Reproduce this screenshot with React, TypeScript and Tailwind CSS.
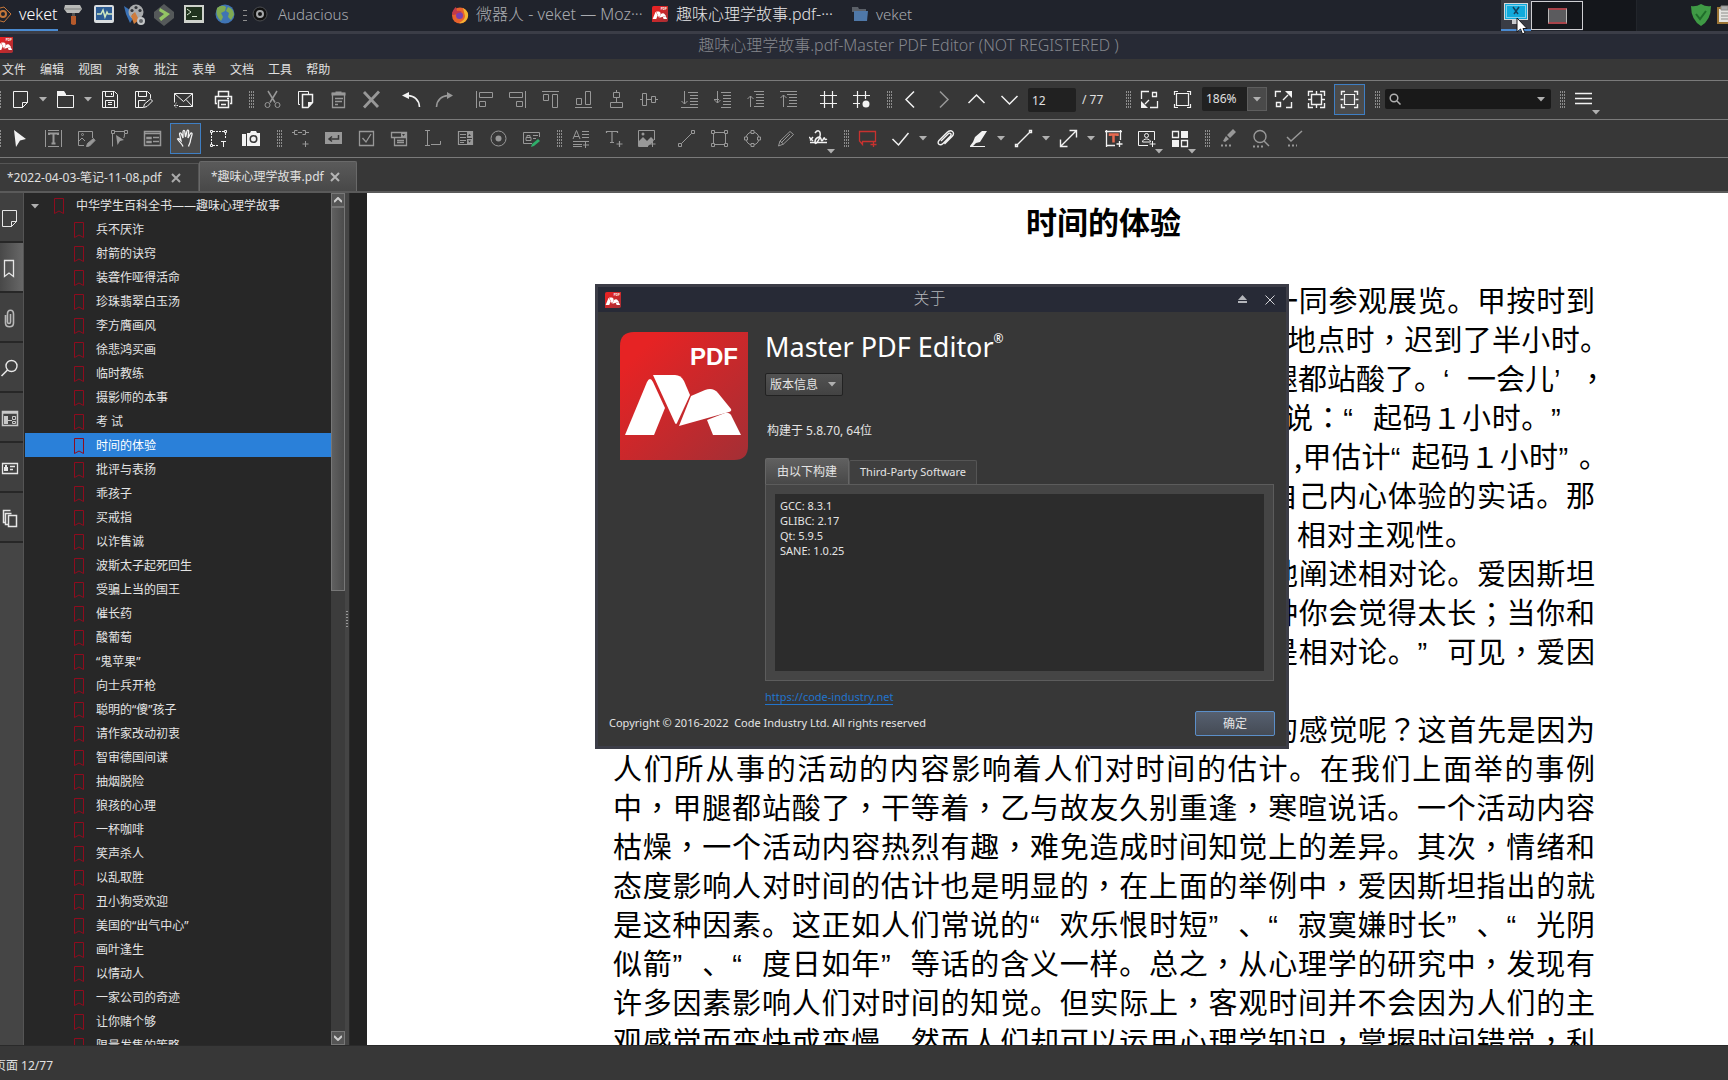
import React from "react";

type IconProps = { name: string };

/* Toolbar glyphs, drawn on a 19 x 19 grid */
const glyphs: Record<string, React.ReactNode> = {
  new: <path d="M2.5 1.5h14v11l-5 5h-9zM11.5 17.5v-5h5z" />,
  open: (
    <>
      <path d="M1.500 5.500h16v12h-16z" />
      <path d="M1 1h7l2 3v2H1z" fill="currentColor" stroke="none" />
    </>
  ),
  save: <path d="M1.500 1.500h12l3 3v13h-15zM4.500 1.500v5h8v-5M10.500 3v2M4.500 17.500v-7h9v7M7 12.500h4M7 14.500h4" />,
  saveas: (
    <>
      <path d="M9 17.500H1.500v-16h12l3 3v4M4.500 1.500v5h8v-5M4.500 17.500v-7h7" />
      <path d="M9.500 17.500l1-3.500 6-5 2 2-5.500 5.500z" />
    </>
  ),
  mail: (
    <>
      <path d="M5 16.500h13.500v-13H.5v9M.5 3.500l9 8 9-8M12 9.500l6.500 7" />
      <path d="M0 15.500h5M2.500 13l-2.500 2.500L2.500 18" strokeDasharray="1.500 1" />
    </>
  ),
  print: (
    <>
      <path d="M4.500 6V1.500h10V6M3 13.500H1.500v-7h16v7H16" strokeWidth="1.500" />
      <path d="M4.500 10.500h10v7h-10zM7 14.500h5M13 8.500h2" strokeWidth="1.500" />
    </>
  ),
  cut: (
    <>
      <path d="M5 1l7 11.500M14 1L7 12.500" strokeWidth="1.500" />
      <circle cx="4.500" cy="15" r="2.500" />
      <circle cx="14.500" cy="15" r="2.500" />
    </>
  ),
  copy: (
    <>
      <path d="M4 14.500H2.500v-13h10V4" />
      <path d="M6.500 4.500h10v8l-4.500 5H6.500z" strokeWidth="1.500" />
      <path d="M12 17v-5h5z" fill="currentColor" stroke="none" />
    </>
  ),
  paste: (
    <>
      <path d="M3.500 3.500h12v14h-12zM6 8.500h8M6 11.500h7M6 14.500h3" strokeWidth="1.300" />
      <path d="M2.500 2.500h4v-1h6v1h4v3h-14z" fill="currentColor" stroke="none" />
    </>
  ),
  del: <path d="M2 2l14 15M17 1.500L2 17.500" strokeWidth="2.800" />,
  undo: (
    <>
      <path d="M17.500 17c-.5-7-4-11-12-11.500" strokeWidth="1.600" />
      <path d="M0 5.500L7 2v7z" fill="currentColor" stroke="none" />
    </>
  ),
  redo: (
    <>
      <path d="M1.500 17c.5-7 4-11 12-11.500" strokeWidth="1.600" />
      <path d="M18 5.500L12 2v7z" fill="currentColor" stroke="none" />
    </>
  ),
  alignL: <path d="M1.500 1v17M4.500 2.500h13v5h-13zM4.500 11.500h6v5h-6z" />,
  alignR: <path d="M17.500 1v17M1.500 2.500h13v5h-13zM8.500 11.500h6v5h-6z" />,
  alignT: <path d="M1 1.500h17M2.500 4.500h5v6h-5zM11.500 4.500h5v13h-5z" />,
  alignB: <path d="M1 17.500h17M2.500 8.500h5v6h-5zM11.500 1.500h5v13h-5z" />,
  alignC: <path d="M9.500 0v2M6.500 2.500h6v5h-6zM9.500 8v4M3.500 12.500h12v5h-12z" />,
  alignM: <path d="M2.500 3.500h4v12h-4zM7 9.500h5M11.500 6.500h4v6h-4zM16 9.500h2M0 9.500h2" />,
  bottom: <path d="M1 17.500h17M4.500 1v13M1.500 11l3 3 3-3M8 2.500h10M10 5.500h8M10 8.500h8M10 11.500h8M10 14.500h8" />,
  back: <path d="M8 17.500h10M1 9.500h5M4.500 1v12M1.500 10l3 3 3-3M8 2.500h10M10 5.500h8M10 8.500h8M10 11.500h8M10 14.500h8" />,
  fwd: <path d="M8 1.500h10M4.500 17V6M1.500 9l3-3 3 3M10 4.500h8M10 7.500h8M10 10.500h8M10 13.500h8M8 16.500h10" />,
  top: <path d="M1 1.500h17M4.500 17V5M1.500 8l3-3 3 3M8 4.500h10M10 7.500h8M10 10.500h8M10 13.500h8M8 16.500h10" />,
  grid: <path d="M1 5.500h17M1 13.500h17M5.500 1v17M13.500 1v17" strokeWidth="1.200" />,
  snap: (
    <>
      <path d="M1 5.500h17M1 13.500h7M5.500 1v17M13.500 1v8" strokeWidth="1.200" />
      <circle cx="14" cy="14" r="3.500" fill="currentColor" stroke="none" />
    </>
  ),
  prev: <path d="M13 1.500l-8 8 8 8" strokeWidth="1.500" />,
  next: <path d="M6 1.500l8 8-8 8" strokeWidth="1.500" />,
  up: <path d="M1.500 13l8-8 8 8" strokeWidth="1.500" />,
  down: <path d="M1.500 6l8 8 8-8" strokeWidth="1.500" />,
  fitwin: (
    <>
      <path d="M1.500 9V1.500H9M12.500 2.500h4v4h-4zM17.500 11v6.500H10M5 14l4-4" strokeWidth="1.300" />
      <path d="M1 18v-7l7 7z" fill="currentColor" stroke="none" />
    </>
  ),
  actual: <path d="M3.500 3.500h12v12h-12zM1.500 5V1.500H5M14 1.500h3.500V5M17.500 14v3.500H14M5 17.500H1.500V14" strokeWidth="1.200" />,
  expand: (
    <>
      <path d="M1.500 7V1.500H7M2.500 12.500h4v4h-4zM17.500 12v5.500H12M9 10l5-5" strokeWidth="1.400" />
      <path d="M18 1v7l-7-7z" fill="currentColor" stroke="none" />
    </>
  ),
  fitpage: (
    <>
      <path d="M1.500 6V1.500H6M13 1.500h4.500V6M17.500 13v4.500H13M6 17.500H1.500V13" strokeWidth="1.400" />
      <path d="M4.500 4.500h10v10h-10zM9.500 1v3M9.500 15v3M1 9.500h3M15 9.500h3" strokeWidth="1.400" />
    </>
  ),
  fitwidth: (
    <>
      <path d="M1.500 5V1.500H5M14 1.500h3.500V5M17.500 14v3.500H14M5 17.500H1.500V14M.5 9.500h3M15.500 9.500h3" strokeWidth="1.400" />
      <path d="M4.500 4.500h10v10h-10z" strokeWidth="1.200" />
    </>
  ),
  menu: <path d="M1 3.500h17M1 8.500h17M1 13.500h17" strokeWidth="1.500" />,
  pointer: <path d="M3 1l12 9-6 1.500L5 18z" fill="currentColor" stroke="none" />,
  text: (
    <>
      <path d="M1.500 1v17M17.500 1v17M4 1.500h11M4 17.500h11" />
      <path d="M5 6V4.500h9V6M9.500 4.500v10M7.500 14.500h4" strokeWidth="2" />
    </>
  ),
  editimg: (
    <>
      <path d="M7 16.500H1.500v-14h14V9M2 12l3-3 3 3" />
      <circle cx="5.500" cy="5.500" r="1" />
      <path d="M9.500 17.500l1-3 6-5 1.500 2-5.500 5.500z" fill="currentColor" />
    </>
  ),
  editpath: (
    <>
      <path d="M5 2.500h9M2.500 5v12.500M14.500 5q0 4-1 4" />
      <path d="M1.500 1.500h3v3h-3zM14.500 1.500h3v3h-3z" />
      <path d="M6 6l8 5-4 1-2.500 4z" fill="currentColor" stroke="none" />
    </>
  ),
  form: <path d="M1.500 2.500h16v14h-16zM2 4.500h15M4 8.500h4v1H4zM10 8.500h6M4 12.500h4v1H4zM10 12.500h6" strokeWidth="1.500" />,
  hand: (
    <path
      d="M7 17.500c-1-3-4-5-5.500-7.500 1-1 2 0 3.500 1.500L3.500 5c0-1.500 1.500-1.500 2 0L7 9V2.500c.2-1.500 1.600-1.500 1.800 0L9.500 8l1.500-6c.5-1.300 1.800-1 1.700.5L12 9l2.500-4.500c.8-1 2-.3 1.500 1L14.500 11c0 3-1.500 4-2 6.500"
      strokeWidth="1.300"
    />
  ),
  marquee: (
    <>
      <path d="M4 2.500h11M2.500 4v11M16.500 4v5M4 16.500h5" strokeDasharray="2 1" />
      <path d="M1.500 1.500h2v2h-2zM15.500 1.500h2v2h-2zM1.500 15.500h2v2h-2zM12 12.500h5M14.500 12v6" />
    </>
  ),
  camera: (
    <>
      <path d="M0 5h4v12H0zM5 4h3l1-2h5l1 2h3v13H5z" fill="currentColor" stroke="none" />
      <circle cx="11.500" cy="10" r="4" fill="#373737" stroke="none" />
      <circle cx="11.500" cy="10" r="2.500" fill="currentColor" stroke="none" />
    </>
  ),
  link: <path d="M1 3.500h3M7 3.500h4M15 3.500h3M6.500 1.500h-3v4h3M11.500 1.500h3v4h-3M14.500 12v6M11.500 15h6" />,
  btn: (
    <>
      <path d="M1 3h17v12H1z" fill="currentColor" stroke="none" />
      <path d="M14.500 6v4H6M8 7.500L5 10l3 2.500" stroke="#373737" strokeWidth="1.500" />
    </>
  ),
  check: <path d="M2.500 2.500h14v14h-14zM5.500 9l3.500 4 5-8" strokeWidth="1.300" />,
  combo: (
    <>
      <path d="M1.500 3.500h15v5h-15zM4.500 8.500v8h12v-8M7 11.500h7M7 13.500h7" strokeWidth="1.300" />
      <path d="M11 3h5v5h-5z" fill="currentColor" stroke="none" />
      <path d="M12 5h3l-1.500 2z" fill="#373737" stroke="none" />
    </>
  ),
  field: <path d="M4.500 1.500v15M2 1.500h5M2 16.500h5M8 15.500h9.500V12" />,
  list: (
    <>
      <path d="M2.500 2.500h14v13h-14zM4 5.500h6M4 8.500h6M4 11.500h6M4 13.500h4" strokeWidth="1.200" />
      <path d="M11 3h5v6h-5zM11 10h5v5h-5z" fill="currentColor" stroke="none" />
      <path d="M12 7h3l-1.500-2zM12 11.500h3l-1.500 2z" fill="#373737" stroke="none" />
    </>
  ),
  radio: (
    <>
      <circle cx="9.500" cy="9.500" r="7.500" />
      <circle cx="9.500" cy="9.500" r="3" fill="currentColor" stroke="none" />
    </>
  ),
  sign: (
    <>
      <path d="M10 14.500H1.500v-11h16V8M4 11.500h5v-3H4zM5 8V6.500h3V8M11 6.500h5M11 9.500h3" />
      <path d="M9 18l1-3 6-5 2 2-6 5z" fill="#2fae6a" stroke="none" />
    </>
  ),
  addtext: <path d="M2 10L5.500 1.500 9 10M3 7.500h5M11 2.500h7M11 5.500h7M11 8.500h7M2 12.500h16M2 15.500h9M2 17.500h9M14.500 13v6M12 16h6" />,
  plustext: <path d="M2.500 4V2.500h11V4M8 2.500v11M6 13.500h4M15.500 12v6M12.500 15h6" strokeWidth="1.200" />,
  image: (
    <>
      <path d="M11 17.500H1.500v-16h16V11M15.500 12v6M12.500 15h6" />
      <path d="M2 12l4-4 4 4 4-4 3 3-2 3-4 3H2z" fill="currentColor" stroke="none" />
      <circle cx="6" cy="5" r="1.500" fill="currentColor" stroke="none" />
    </>
  ),
  line: <path d="M4.500 14.500l10-10M1.500 14.500h3v3h-3zM14.500 1.500h3v3h-3z" />,
  rect: <path d="M5 3.500h9M5 15.500h9M3.500 5v9M15.500 5v9M1.500 1.500h3v3h-3zM14.500 1.500h3v3h-3zM1.500 14.500h3v3h-3zM14.500 14.500h3v3h-3z" />,
  ellipse: (
    <>
      <circle cx="9.500" cy="9.500" r="6.500" />
      <path d="M8 1.500h3v3H8zM8 14.500h3v3H8zM1.500 8h3v3h-3zM14.500 8h3v3h-3z" fill="#373737" />
    </>
  ),
  pencil: <path d="M2.500 17l1.500-5L14 2.500l3.500 3L7.500 15zM4 12l3.500 3M5 14l9-9" />,
  initials: (
    <>
      <path d="M1 13.500h17" strokeWidth="1.500" />
      <path d="M0 8l4 4M4 8l-3 3.500M6 4c3-4 6-2 5 3s-5 10-5 6 5-7 6-3 2 0 3-1 0 3 3 1" strokeWidth="1.500" />
    </>
  ),
  callout: <path d="M5 12.500H4.500v3L1.500 12V2.500h16v10H5M15.500 12v6M12.500 15.500h6" strokeWidth="1.300" stroke="#c8322f" />,
  tick: <path d="M1.500 10l6 6 10-12" strokeWidth="1.500" />,
  clip: <path d="M5 12l7-7c2-2 4 0 2.500 2L7 14.500c-3 3-6.500 0-4-3L11 3.500c4-4 9 0 5 4L8.500 15" strokeWidth="1.400" />,
  marker: (
    <>
      <path d="M1 17.500h15" strokeWidth="1" />
      <path d="M6 8l7-6h5l-7 11-4 1-3 3H1l3-4z" fill="currentColor" stroke="none" />
    </>
  ),
  aline: <path d="M3 16L16 3M1.500 15.500h2v2h-2zM15.500 1.500h2v2h-2z" strokeWidth="1.400" />,
  darrow: <path d="M2 17L17 2M10.500 1.500h7v7M1.500 10.500v7h7" strokeWidth="1.400" />,
  tbox: (
    <>
      <path d="M11 16.500H2.500v-14h14V11M1 2.500h17M2.500 1v17M16.500 1v2M15.500 12v6M12.500 15h6" strokeWidth="1.300" />
      <path d="M6 7V5.500h7.500V7M9.500 5.500v8" stroke="#e5694f" strokeWidth="2.500" />
    </>
  ),
  stamp: (
    <>
      <path d="M11 16.500H1.500v-14h16V11M15.500 12v6M12.500 15h6" />
      <circle cx="9.500" cy="6.500" r="2" />
      <path d="M5.500 13c0-4 8-4 8 0z" />
    </>
  ),
  blocks: (
    <>
      <path d="M2.500 2.500h6v6h-6zM11.500 11.500h6v6h-6z" strokeWidth="1.300" />
      <path d="M11 2h7v7h-7zM2 11h7v7H2z" fill="currentColor" stroke="none" />
    </>
  ),
  hlDots: (
    <>
      <path d="M4 12l3-5 3 3-4 3zM8 6l6-6 3 3-6 6z" fill="currentColor" stroke="none" />
      <path d="M2 16.500h11" strokeWidth="2" strokeDasharray="2 2" />
    </>
  ),
  findDots: (
    <>
      <circle cx="8" cy="7.500" r="6" strokeWidth="1.400" />
      <path d="M12 12l5 5" strokeWidth="1.400" />
      <path d="M1 17.500h11" strokeWidth="2" strokeDasharray="2 2" />
    </>
  ),
  tickDots: (
    <>
      <path d="M2 8l4 4L17 2" strokeWidth="1.500" />
      <path d="M3 16.500h9" strokeWidth="2" strokeDasharray="2 2" />
    </>
  ),
  bookmark: <path d="M4.500 1.500h9v16L9 14l-4.500 3.500z" strokeWidth="1.300" />,
  attach: <path d="M5.500 6v8c0 5 8 5 8 0V5c0-5-6-5-6 0v8c0 2 3 2 3 0V5" strokeWidth="1.600" stroke="#b8b8b8" />,
  search: (
    <>
      <circle cx="11.500" cy="7" r="5.500" strokeWidth="1.400" />
      <path d="M7.500 11l-6 6" strokeWidth="1.600" />
    </>
  ),
  fields: (
    <g stroke="#c8c8c8">
      <path d="M2.500 2.500h15v14h-15zM2 4h16" strokeWidth="1.500" />
      <path d="M4 7h4v8H4z" fill="#c8c8c8" stroke="none" />
      <path d="M8 11.500h4M12.500 7.500h3v3h-3zM12.500 12.500h3v2h-3z" />
    </g>
  ),
  signs: (
    <>
      <path d="M2.500 4.500h15v10h-15zM10 7.500h5M10 10.500h3" strokeWidth="1.300" />
      <path d="M4 8h4v4H4zM5 6h2v2H5z" fill="currentColor" stroke="none" />
    </>
  ),
  pages: <path d="M6 13.500H3.500v-12h7M8 15.500H5.500v-11h6M8.500 6.500h8v11h-8z" strokeWidth="1.500" />,
};

function Icon({ name }: IconProps) {
  return (
    <svg viewBox="0 0 19 19" className="h-[19px] w-[19px] shrink-0" fill="none" stroke="currentColor" aria-hidden="true">
      {glyphs[name]}
    </svg>
  );
}

function PdfMark({ className }: { className: string }) {
  return (
    <svg viewBox="0 0 128 128" className={className} aria-hidden="true">
      <defs>
        <linearGradient id="mark" x1="0" y1="0" x2="1" y2="1">
          <stop offset="0.150" stopColor="#e62324" />
          <stop offset="1" stopColor="#a32f35" />
        </linearGradient>
      </defs>
      <path d="M14 0h114v114q0 14-14 14H0V14Q0 0 14 0z" fill="url(#mark)" />
      <path d="M5 103L27 50q3-6 6 0l12 26-11 27z" fill="#fff" />
      <path d="M33 43h22q6 0 9 6l6 14-13 28q-1 2-2 0z" fill="#fff" />
      <path d="M59 94l12-30 14-6q8-3 13 3l13 16q1 2-2 3z" fill="#fff" />
      <path d="M87 88l18-7q5-1 7 4l9 18H93z" fill="#fff" />
      <text x="70" y="33" fontFamily="Liberation Sans" fontWeight="700" fontSize="24" fill="#fff">PDF</text>
    </svg>
  );
}

const Caret = ({ className = "" }: { className?: string }) => (
  <svg viewBox="0 0 8 5" className={"h-[5px] w-2 shrink-0 fill-[#b0b0b0] " + className} aria-hidden="true">
    <path d="M0 0h8L4 4.500z" />
  </svg>
);

function Grip({ first = false }: { first?: boolean }) {
  return (
    <span className={first ? "flex h-[31px] w-1 shrink-0 items-center justify-start" : "flex h-[31px] w-4 shrink-0 items-center justify-end pr-0.5"}>
      <span className={(first ? "w-0.5" : "w-[5px]") + " h-[17px] bg-[repeating-linear-gradient(0deg,#8d8d8d_0_2px,transparent_2px_3px)] [mask-image:repeating-linear-gradient(90deg,#000_0_1px,transparent_1px_2px)]"} />
    </span>
  );
}

const Sep = () => <span className="mt-2 h-4 w-[7px] shrink-0" />;

/* Item grammar: "name" enabled, "-name" disabled, "!name" pressed, "name+" with a corner caret, "v" caret, "|" space, "#" grip */
function Tools({ items }: { items: string }) {
  return (
    <>
      {items.split(" ").map((t, i) => {
        if (t === "#") return <Grip key={i} />;
        if (t === "|") return <Sep key={i} />;
        if (t === "v")
          return (
            <button key={i} aria-label="更多" className="flex h-[31px] w-3 shrink-0 items-center justify-center">
              <Caret />
            </button>
          );
        const off = t.startsWith("-");
        const on = t.startsWith("!");
        const corner = t.endsWith("+");
        const name = t.replace(/[-!+]/g, "");
        return (
          <button
            key={i}
            aria-label={name}
            className={
              "relative flex h-[31px] shrink-0 items-center justify-center " +
              (on ? "mx-px w-[31px] border border-[#3f7fc4] bg-[#4b4b4b] " : "w-[33px] ") +
              (off ? "text-[#989898]" : "text-[#f2f2f2]")
            }
          >
            <Icon name={name} />
            {corner && <Caret className="absolute right-0 bottom-0" />}
          </button>
        );
      })}
    </>
  );
}

function TaskBar() {
  return (
    <div className="flex h-[34px] items-stretch border-b-[3px] border-[#3b3d47] bg-[#20232c] text-base leading-[28px] font-light text-[#a9abb0]">
      <button className="flex w-[58px] shrink-0 items-start border-b-2 border-[#4a8ad0] text-white">
        <svg viewBox="0 0 18 20" className="-ml-1 mt-1 h-5 w-[18px] shrink-0" fill="none" stroke="#c4763a" aria-hidden="true">
          <circle cx="7" cy="10" r="3" strokeWidth="2" />
          <path d="M0 5l8-2 7 7-7 8-7-2" />
        </svg>
        <span className="ml-[5px]">veket</span>
      </button>
      <div className="flex shrink-0 items-start gap-2.5 pt-1 pl-[5px]">
        <svg viewBox="0 0 20 22" className="h-[22px] w-5" aria-hidden="true">
          <path d="M2 1h15l2 4-3 4H4L1 5z" fill="#b9bab8" />
          <path d="M2 5h16" stroke="#7d7f7d" />
          <path d="M9 9h3v4H9z" fill="#555" />
          <path d="M8 12h5v8q-2 2-5 0z" fill="#b65a2b" />
        </svg>
        <svg viewBox="0 0 22 20" className="mr-0.5 h-5 w-[22px]" aria-hidden="true">
          <rect x="1" y="1" width="20" height="18" rx="2" fill="#d9dde0" />
          <rect x="3" y="3" width="16" height="13" fill="#2c5c94" />
          <path d="M4 10h4l2-4 2 7 2-5 1 2h4" fill="none" stroke="#cfe8c0" strokeWidth="1.500" />
        </svg>
        <svg viewBox="0 0 22 22" className="-ml-1 h-[22px] w-[22px]" aria-hidden="true">
          <path d="M1 2l12 8-6 9-4-9z" fill="#3a72b8" />
          <circle cx="13" cy="8" r="7.500" fill="#a9abad" />
          <g fill="#33363b">
            <circle cx="13" cy="3.500" r="1.600" /><circle cx="9" cy="6.500" r="1.600" /><circle cx="17" cy="6.500" r="1.600" /><circle cx="11" cy="11" r="1.600" />
          </g>
          <path d="M8 12l4-4 4 8-5 4z" fill="#cf7c3c" />
          <circle cx="18" cy="17" r="4" fill="#c4c6c8" />
          <circle cx="18" cy="17" r="2" fill="#63666a" />
        </svg>
        <svg viewBox="0 0 22 22" className="-ml-0.5 h-[22px] w-[22px]" aria-hidden="true">
          <path d="M11 0l10 8v6l-10 8L1 14V8z" fill="#55595a" />
          <path d="M7 4l10 6-9 7-2-3 5-4-5-3z" fill="#93c464" />
        </svg>
        <svg viewBox="0 0 22 20" className="-ml-0.5 h-5 w-[22px]" aria-hidden="true">
          <rect x="1" y="1" width="20" height="18" fill="#cfd2cc" />
          <rect x="3" y="3" width="16" height="13" fill="#20331e" />
          <path d="M4 5l4 3-4 3M9 12.500h5" fill="none" stroke="#d7e6cf" />
        </svg>
        <svg viewBox="0 0 20 20" className="h-5 w-5" aria-hidden="true">
          <circle cx="10" cy="10" r="9.500" fill="#3f74b4" />
          <path d="M2 4q5-4 9-1l-1 4-4 2 2 4-2 4q-6-5-4-13zM13 3q6 2 6 8l-3 5-3-3 1-4-3-2z" fill="#7faa52" />
        </svg>
        <span className="mt-1.5 -ml-0.5 h-[11px] w-1 bg-[repeating-linear-gradient(0deg,#8d8d8d_0_1px,transparent_1px_5px)]" />
      </div>
      <button className="ml-[5px] flex w-[199px] shrink-0 items-start gap-2.5 text-[15px]">
        <svg viewBox="0 0 16 16" className="mt-1.5 h-4 w-4" aria-hidden="true">
          <circle cx="8" cy="8" r="7" fill="#111" stroke="#4a4c50" />
          <circle cx="8" cy="8" r="3" fill="none" stroke="#a4a6a8" strokeWidth="2" />
        </svg>
        Audacious
      </button>
      <button className="flex w-[201px] shrink-0 items-start gap-[7px] whitespace-nowrap">
        <svg viewBox="0 0 18 18" className="mt-1.5 h-[18px] w-[18px] shrink-0" aria-hidden="true">
          <circle cx="9" cy="9.500" r="8" fill="#e8622c" />
          <path d="M12 2q7 4 4.500 10Q14 18 8 17q6-3 6-7z" fill="#f3b532" />
          <circle cx="8.500" cy="9.500" r="3.500" fill="#7b3fae" />
          <path d="M1 7q2-5 4-6l1 4q2-1 5 1l-4 1q-2 2-5 2z" fill="#c23a4a" />
        </svg>
        微器人 - veket — Moz···
      </button>
      <button className="flex w-[200px] shrink-0 items-start gap-2 whitespace-nowrap text-[#e6e6e8]">
        <PdfMark className="mt-1.5 h-4 w-4 shrink-0" />
        趣味心理学故事.pdf-···
      </button>
      <button className="flex items-start gap-2 text-[15px]">
        <svg viewBox="0 0 16 16" className="mt-1.5 h-4 w-4" aria-hidden="true">
          <path d="M0 1h6l1 2h7v3H0z" fill="#5b6068" />
          <path d="M2 5h14l-1 10H2z" fill="#4f78a8" />
        </svg>
        veket
      </button>
      <div className="ml-auto flex shrink-0 items-stretch">
        <button aria-label="截图" className="relative flex w-[30px] justify-center border-b-2 border-[#4a8ad0] bg-[#3a3d45] pt-[3px]">
          <svg viewBox="0 0 24 24" className="h-6 w-6" aria-hidden="true">
            <rect x="0.500" y="0.500" width="23" height="16" fill="#10aadc" stroke="#d5d8da" />
            <rect x="2.500" y="2.500" width="19" height="12" fill="none" stroke="#f4f8fa" strokeDasharray="1 1" />
            <path d="M9 4l5 7M15 4l-5 7" stroke="#15405c" strokeWidth="1.500" />
            <path d="M8 17h8v4H8z" fill="#c9ccd0" />
          </svg>
          <svg viewBox="0 0 12 18" className="absolute top-[17px] left-[15px] z-10 h-[18px] w-3" aria-hidden="true">
            <path d="M1 1v14l3.500-3 2 5 2.500-1-2-4.500h4z" fill="#fff" stroke="#14161b" />
          </svg>
        </button>
        <button aria-label="工作区" className="my-px flex w-[52px] items-center justify-center border border-[#cfcfd3] bg-[#14161b]">
          <span className="h-4 w-[19px] border border-y-2 border-x-[#b9b9b9] border-y-[#a8434a] bg-[#5b5b5e]" />
        </button>
        <span className="w-[54px] border-r border-[#22252b] bg-[#14161b]" />
        <span className="flex items-start gap-1.5 bg-[#1b1e24] pt-1 pl-[54px]">
          <svg viewBox="0 0 20 22" className="h-[22px] w-5" aria-hidden="true">
            <path d="M10 0q5 3 10 2 0 14-10 20Q0 16 0 2q5 1 10-2z" fill="#3f9a45" />
            <path d="M5 10l4 5 6-8" fill="none" stroke="#1f6d2a" strokeWidth="2" />
          </svg>
          <svg viewBox="0 0 11 22" className="h-[22px] w-[11px]" aria-hidden="true">
            <path d="M0 3h11v17H0z" fill="#9a7434" />
            <path d="M2 5h9v13H2z" fill="#e4e4e0" />
            <path d="M4 2h7v4H4zM4 9h7M4 12h7M4 15h7" fill="#a8aaab" stroke="#8e8e8a" />
          </svg>
        </span>
      </div>
    </div>
  );
}

const menus = ["文件", "编辑", "视图", "对象", "批注", "表单", "文档", "工具", "帮助"];

const chapters = [
  "兵不厌诈", "射箭的诀窍", "装聋作哑得活命", "珍珠翡翠白玉汤", "李方膺画风", "徐悲鸿买画", "临时教练", "摄影师的本事", "考 试",
  "时间的体验", "批评与表扬", "乖孩子", "买戒指", "以诈售诚", "波斯太子起死回生", "受骗上当的国王", "催长药", "酸葡萄", "“鬼苹果”",
  "向士兵开枪", "聪明的“傻”孩子", "请作家改动初衷", "智审德国间谍", "抽烟脱险", "狼孩的心理", "一杯咖啡", "笑声杀人", "以乱取胜",
  "丑小狗受欢迎", "美国的“出气中心”", "画叶逢生", "以情动人", "一家公司的奇迹", "让你赌个够", "限量发售的策略",
];

const RedBookmark = () => (
  <svg viewBox="0 0 12 18" className="h-[18px] w-3 shrink-0" fill="none" stroke="#8e0c1e" aria-hidden="true">
    <path d="M1.500 1.500h9v15L6 14l-4.500 2.500z" />
  </svg>
);

function Outline() {
  return (
    <nav className="flex min-w-0 flex-1 flex-col overflow-hidden bg-[#272727] pl-px text-xs leading-[22px] text-[#e4e4e4]">
      <div className="flex h-6 shrink-0 items-center pt-0.5 pl-1.5">
        <Caret />
        <span className="ml-3.5"><RedBookmark /></span>
        <span className="ml-[11px] whitespace-nowrap">中华学生百科全书——趣味心理学故事</span>
      </div>
      {chapters.map((c) => (
        <a
          key={c}
          href="#"
          className={"flex h-6 shrink-0 items-center gap-[11px] pt-0.5 pl-12 whitespace-nowrap " + (c === "时间的体验" ? "bg-[#2a80d9] text-white" : "")}
        >
          <RedBookmark />
          {c}
        </a>
      ))}
    </nav>
  );
}

type Line = { t: string; box?: string; quote?: string };

const tail = "ml-[656px] w-[326px]";
const lines: Line[] = [
  { t: "一同参观展览。甲按时到", box: tail },
  { t: "地点时，迟到了半小时。", box: "ml-[674px] w-[322px]" },
  { t: "腿都站酸了。‘一会儿’，", box: "ml-[656px] w-[338px]", quote: "w-6" },
  { t: "说：“起码１小时。”", box: "ml-[671px] w-[296px]" },
  { t: ",甲估计“起码１小时”。", box: "ml-[681px] w-[314px]", quote: "w-5" },
  { t: "自己内心体验的实话。那", box: tail },
  { t: "相对主观性。", box: "ml-[684px] w-[177px]" },
  { t: "地阐述相对论。爱因斯坦", box: tail },
  { t: "钟你会觉得太长；当你和", box: tail },
  { t: "是相对论。”可见，爱因", box: tail },
  { t: "" },
  { t: "的感觉呢？这首先是因为", box: tail },
  { t: "人们所从事的活动的内容影响着人们对时间的估计。在我们上面举的事例" },
  { t: "中，甲腿都站酸了，干等着，乙与故友久别重逢，寒暄说话。一个活动内容" },
  { t: "枯燥，一个活动内容热烈有趣，难免造成时间知觉上的差异。其次，情绪和" },
  { t: "态度影响人对时间的估计也是明显的，在上面的举例中，爱因斯坦指出的就" },
  { t: "是这种因素。这正如人们常说的“欢乐恨时短”、“寂寞嫌时长”、“光阴" },
  { t: "似箭”、“度日如年”等话的含义一样。总之，从心理学的研究中，发现有" },
  { t: "许多因素影响人们对时间的知觉。但实际上，客观时间并不会因为人们的主" },
  { t: "观感觉而变快或变慢。然而人们却可以运用心理学知识，掌握时间错觉，利" },
];

function TextLine({ t, box = "w-[982px]", quote = "w-[29px]" }: Line) {
  return (
    <p className={"h-[39px] whitespace-nowrap [text-align-last:justify] " + box}>
      {t.split(/([，：；？]|[“”‘’])/).map((s, i) =>
        /^[，：；？]$/.test(s) ? (
          <span key={i} className="font-['Noto_Sans_CJK_TC',sans-serif]">{s}</span>
        ) : /^[“”‘’]$/.test(s) ? (
          <span key={i} className={"inline-block text-left font-['Liberation_Sans',sans-serif] [text-align-last:left] " + quote}>{s}</span>
        ) : (
          s
        )
      )}
    </p>
  );
}

function AboutDialog() {
  return (
    <div role="dialog" aria-label="关于" className="absolute top-[284px] left-[595px] z-20 w-[694px] border-[3px] border-[#3c3d47] bg-[#373737] text-[#e4e4e4]">
      <div className="flex h-[25px] items-center bg-[#272a36] px-[7px] text-[#b4b6bb]">
        <PdfMark className="h-4 w-4" />
        <span className="flex-1 pb-1 text-center text-base leading-5 font-light">关于</span>
        <button aria-label="卷起" className="mr-[18px]">
          <svg viewBox="0 0 9 9" className="h-[9px] w-[9px] fill-[#b4b6bb]"><path d="M0 5l4.500-5L9 5zM0 6h9v2H0z" /></svg>
        </button>
        <button aria-label="关闭" className="mr-1">
          <svg viewBox="0 0 10 10" className="h-2.5 w-2.5" stroke="#d4d5d8"><path d="M.5.5l9 9M9.500.5l-9 9" /></svg>
        </button>
      </div>
      <div className="flex gap-[17px] pt-5 pr-3 pl-[22px]">
        <PdfMark className="h-32 w-32 shrink-0" />
        <div className="flex min-w-0 flex-1 flex-col items-start">
          <h1 className="h-[37px] text-[27px] leading-[30px] whitespace-nowrap text-white">
            Master PDF Editor<sup className="top-[-14px] text-xs">®</sup>
          </h1>
          <button className="mt-1 flex h-[23px] items-center gap-2.5 rounded-xs border border-[#222] bg-linear-to-b from-[#525252] to-[#434343] px-1 pr-1.5 text-xs">
            版本信息
            <Caret />
          </button>
          <p className="mt-[25px] ml-0.5 text-xs leading-5">构建于 5.8.70, 64位</p>
          <div role="tablist" className="mt-[17px] flex items-end text-xs">
            <button role="tab" aria-selected="true" className="h-[26px] w-[84px] rounded-t-xs border border-b-0 border-[#666] bg-linear-to-b from-[#606060] to-[#484848]">由以下构建</button>
            <button role="tab" aria-selected="false" className="h-6 w-32 rounded-t-xs border border-b-0 border-[#555] bg-[#3f3f3f] text-[11px]">Third-Party Software</button>
          </div>
          <div className="w-full border border-[#5c5c5c] bg-[#454545] p-[9px]">
            <ul className="h-[177px] bg-[#2c2c2c] px-[5px] pt-1 text-[11px] leading-[15px]">
              <li>GCC: 8.3.1</li>
              <li>GLIBC: 2.17</li>
              <li>Qt: 5.9.5</li>
              <li>SANE: 1.0.25</li>
            </ul>
          </div>
          <a href="https://code-industry.net" className="mt-2 border-b border-[#2274cc] text-[11px] leading-[15px] text-[#2274cc]">https://code-industry.net</a>
        </div>
      </div>
      <div className="flex items-center justify-between pt-1.5 pr-[11px] pb-2.5 pl-[11px]">
        <p className="text-[11px] whitespace-pre">Copyright © 2016-2022  Code Industry Ltd. All rights reserved</p>
        <button className="h-[25px] w-20 rounded-xs border border-[#5b8fc9] bg-linear-to-b from-[#566070] to-[#454b55] text-xs">确定</button>
      </div>
    </div>
  );
}

const sideTabs = ["new", "bookmark", "attach", "search", "fields", "signs", "pages"];

export default function App() {
  return (
    <div className="relative flex h-screen flex-col overflow-hidden bg-[#373737] font-['Noto_Sans','Noto_Sans_CJK_SC',sans-serif] text-[#e0e0e0]">
      <TaskBar />
      <header className="flex h-[25px] shrink-0 items-start bg-[#272a35]">
        <PdfMark className="mt-[3px] -ml-[3px] h-4 w-4 shrink-0" />
        <span className="flex-1 pl-[76px] text-center text-base leading-[22px] font-light text-[#85878d]">趣味心理学故事.pdf-Master PDF Editor (NOT REGISTERED )</span>
      </header>
      <nav className="flex h-[22px] shrink-0 items-center gap-3.5 border-b border-[#7a7a7a] pl-0.5 text-xs">
        {menus.map((m) => (
          <button key={m} className="leading-5">{m}</button>
        ))}
      </nav>
      <div className="flex h-[39px] shrink-0 items-start border-b border-[#7a7a7a] pt-[3px]">
        <Grip first />
        <Tools items="new v open v save saveas | mail | print # -cut copy -paste -del | undo -redo | -alignL -alignR -alignT -alignB -alignC -alignM | -bottom -back -fwd -top | grid snap # prev -next up down" />
        <input aria-label="页码" defaultValue="12" className="mt-1 ml-0.5 h-6 w-12 shrink-0 rounded-xs bg-[#212121] pl-1 text-xs" />
        <span className="w-[41px] shrink-0 pl-1.5 text-xs leading-8">/ 77</span>
        <Grip />
        <Tools items="fitwin actual" />
        <label className="relative mt-[3px] ml-[3px] flex h-6 w-[65px] shrink-0 rounded-xs bg-[#212121]">
          <select aria-label="缩放" className="h-full w-full appearance-none pl-1 text-xs">
            <option>186%</option>
          </select>
          <span className="pointer-events-none absolute inset-y-0 right-0 flex w-5 items-center justify-center border border-[#5e5e5e] bg-[#4a4a4a]">
            <Caret />
          </span>
        </label>
        <Tools items="expand fitpage !fitwidth #" />
        <label className="mt-[5px] ml-[3px] flex h-5 w-[166px] shrink-0 items-center rounded-xs bg-[#191919] px-1">
          <svg viewBox="0 0 12 12" className="h-3 w-3" fill="none" stroke="#b0b0b0" strokeWidth="1.500" aria-hidden="true">
            <circle cx="5" cy="5" r="3.800" />
            <path d="M8 8l3.500 3.500" />
          </svg>
          <input aria-label="搜索" className="min-w-0 flex-1 bg-transparent px-1 text-xs" />
          <Caret className="mr-0.5" />
        </label>
        <Grip />
        <Tools items="menu+" />
      </div>
      <div className="flex h-[38px] shrink-0 items-start border-b border-[#7a7a7a] pt-[3px]">
        <Grip first />
        <Tools items="pointer -text -editimg -editpath -form !hand marquee camera # -link -btn -check -combo -field -list -radio -sign # -addtext -plustext -image | -line -rect -ellipse -pencil initials+ # callout tick v clip marker v aline v darrow v tbox stamp+ blocks+ # -hlDots -findDots -tickDots" />
      </div>
      <div role="tablist" className="flex h-[35px] shrink-0 items-end border-b-2 border-[#5a5a5a] text-xs">
        <div role="tab" className="flex h-7 w-[199px] shrink-0 items-center gap-2.5 border-t border-r border-[#555] bg-[#3a3a3a] pl-[7px]">
          <span>*2022-04-03-笔记-11-08.pdf</span>
          <button aria-label="关闭标签"><svg viewBox="0 0 10 10" className="h-2.5 w-2.5" stroke="#aaa" strokeWidth="2"><path d="M1 1l8 8M9 1l-8 8" /></svg></button>
        </div>
        <div role="tab" aria-selected="true" className="flex h-[30px] w-[158px] shrink-0 items-center gap-1.5 rounded-t-xs border border-b-0 border-[#696969] bg-linear-to-b from-[#5a5a5a] to-[#484848] pl-[11px]">
          <span>*趣味心理学故事.pdf</span>
          <button aria-label="关闭标签"><svg viewBox="0 0 10 10" className="h-2.5 w-2.5" stroke="#b5b5b5" strokeWidth="2"><path d="M1 1l8 8M9 1l-8 8" /></svg></button>
        </div>
      </div>
      <main className="flex min-h-0 flex-1 bg-[#272727]">
        <div className="flex w-[367px] shrink-0">
          <div className="w-6 shrink-0 border-r border-[#555] bg-[#454545]">
            {sideTabs.map((s, i) => (
              <button
                key={s}
                aria-label={s}
                className={"flex h-[50px] w-full items-center border-b-2 border-[#272727] pt-0.5 text-[#e6e6e6] " + (i === 1 ? "bg-linear-to-r from-[#484848] to-[#686868]" : "bg-[#404040]")}
              >
                <Icon name={s} />
              </button>
            ))}
          </div>
          <Outline />
          <div className="flex w-3.5 shrink-0 flex-col bg-[#3c3c3c]">
            <button aria-label="向上滚动" className="flex h-3.5 items-center justify-center border border-[#777] bg-[#555]">
              <svg viewBox="0 0 8 6" className="h-1.5 w-2" fill="none" stroke="#ccc" strokeWidth="2"><path d="M0 5l4-4 4 4" /></svg>
            </button>
            <span className="h-[384px] border border-[#777] bg-linear-to-r from-[#606060] to-[#4c4c4c]" />
            <button aria-label="向下滚动" className="mt-auto flex h-3.5 items-center justify-center border border-[#777] bg-[#555]">
              <svg viewBox="0 0 8 6" className="h-1.5 w-2" fill="none" stroke="#ccc" strokeWidth="2"><path d="M0 1l4 4 4-4" /></svg>
            </button>
          </div>
          <span className="flex w-[5px] items-center justify-center border-r border-[#2a2a2a] bg-[#454545]">
            <span className="h-4 w-0.5 bg-[repeating-linear-gradient(0deg,#999_0_1px,transparent_1px_3px)]" />
          </span>
          <span className="w-[17px] bg-[#222]" />
        </div>
        <article className="min-w-0 flex-1 overflow-hidden bg-white pt-2 pl-[246px] text-[29px] leading-[39px] text-black font-['Noto_Sans_CJK_SC',sans-serif]">
          <h2 className="mb-10 w-[981px] text-center text-[31px] leading-[39px] font-bold">时间的体验</h2>
          {lines.map((l, i) => (
            <TextLine key={i} {...l} />
          ))}
        </article>
      </main>
      <footer className="flex h-[35px] shrink-0 items-center border-t border-[#2a2a2a] bg-[#373737] text-xs">
        <span className="-ml-1.5 pt-1.5">页面 12/77</span>
      </footer>
      <AboutDialog />
    </div>
  );
}
